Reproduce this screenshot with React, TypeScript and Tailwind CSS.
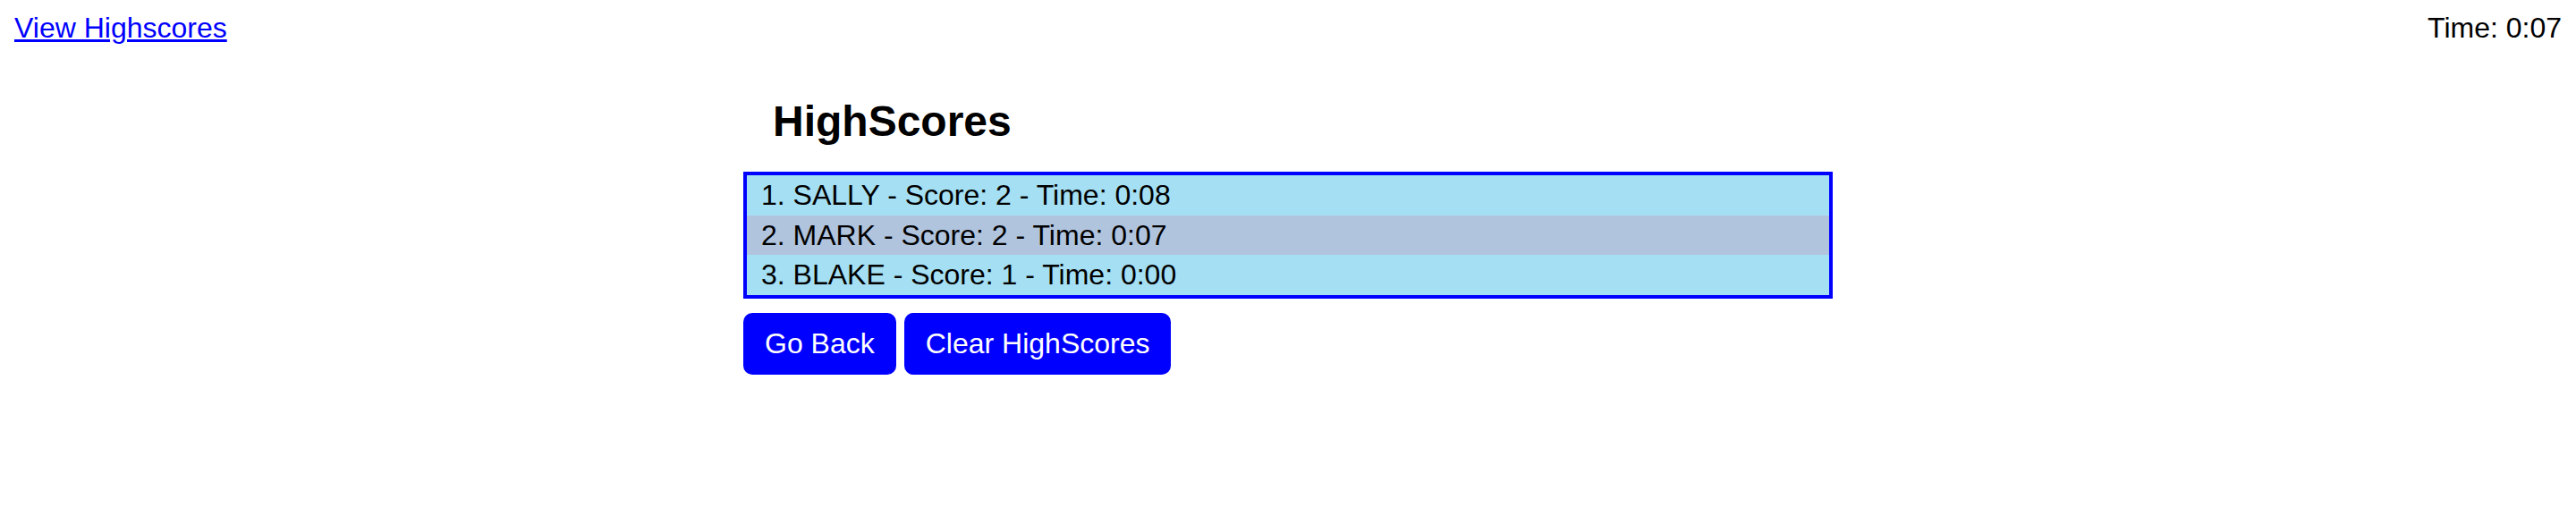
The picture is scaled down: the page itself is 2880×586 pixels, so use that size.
const scores = [
  { name: 'SALLY', score: 2, time: '0:08' },
  { name: 'MARK', score: 2, time: '0:07' },
  { name: 'BLAKE', score: 1, time: '0:00' },
];

export default function App() {
  return (
    <div className="min-h-[586px] bg-white text-black font-['Liberation_Sans',Arial,sans-serif] text-[32px] leading-[37px]">
      <header className="flex items-start justify-between px-4 pt-[13px]">
        <a href="#" className="text-[#0000ff] underline">
          View Highscores
        </a>
        <span>Time: 0:07</span>
      </header>

      <main className="mx-auto w-[1218px]">
        <h2 className="mt-[58px] pl-[33px] text-[48px] leading-[55px] font-bold">HighScores</h2>

        <ol className="mt-[29px] border-4 border-[#0000ff]">
          {scores.map((s, i) => (
            <li
              key={s.name}
              className={`px-4 py-1 leading-[36.7px] ${i % 2 === 1 ? 'bg-[#b0c4de]' : 'bg-[#a4dff3]'}`}
            >
              {i + 1}. {s.name} - Score: {s.score} - Time: {s.time}
            </li>
          ))}
        </ol>

        <div className="mt-4 flex gap-[9px]">
          <button className="rounded-[10px] bg-[#0000ff] px-6 py-4 leading-[37px] text-white">Go Back</button>
          <button className="rounded-[10px] bg-[#0000ff] px-6 py-4 leading-[37px] text-white">Clear HighScores</button>
        </div>
      </main>
    </div>
  );
}
